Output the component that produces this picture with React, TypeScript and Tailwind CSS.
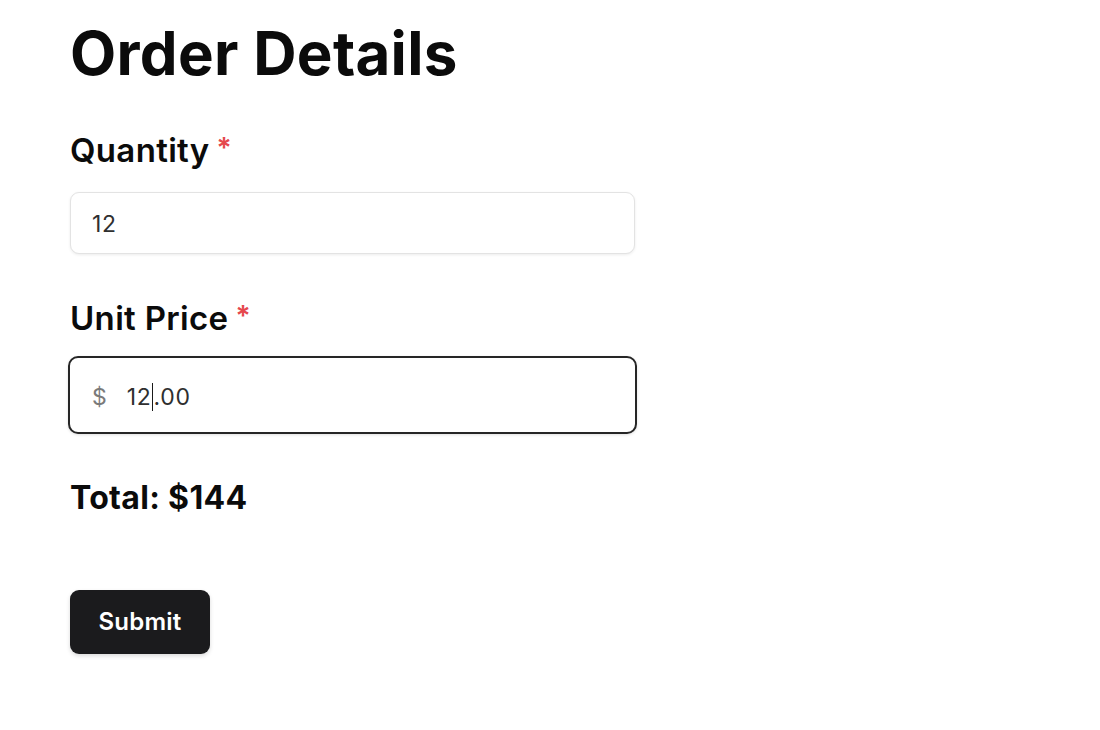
import React from "react";

export default function App() {
  return (
    <div
      className="min-h-[730px] w-[1100px] bg-white text-[#0b0b0b]"
      style={{ fontFamily: "Inter, 'Noto Sans', Arial, sans-serif" }}
    >
      <div className="flex flex-col items-start pl-[70px]">
        <h1 className="mt-[23px] text-[60px] font-bold leading-none tracking-[0.005em]">
          Order Details
        </h1>

        <label className="mt-[51px] flex items-start text-[33px] font-semibold leading-none tracking-[0.01em]">
          Quantity
          <span className="ml-[7px] text-[28px] text-[#e5484d]">*</span>
        </label>
        <div className="mt-[25px] flex h-[62px] w-[565px] items-center rounded-[9px] border border-[#e3e3e3] bg-white px-[21px] shadow-[0_1px_3px_rgba(0,0,0,0.08)]">
          <span className="translate-y-[1px] text-[23px] tracking-[0.03em] text-[#2f2f2f]">12</span>
        </div>

        <label className="mt-[48px] flex items-start text-[33px] font-semibold leading-none tracking-[0.01em]">
          Unit Price
          <span className="ml-[7px] text-[28px] text-[#e5484d]">*</span>
        </label>
        <div className="ml-[-2px] mt-[21px] flex h-[78px] w-[569px] items-center rounded-[10px] border-2 border-[#262626] bg-white px-[22px] shadow-[0_1px_3px_rgba(0,0,0,0.12)]">
          <span className="translate-y-[2px] text-[23px] text-[#7a7a7a]">$</span>
          <span className="ml-[20px] flex translate-y-[2px] items-center text-[23px] tracking-[0.03em] text-[#2f2f2f]">
            12
            <span className="mr-[1px] inline-block h-[28px] w-[1px] bg-[#1a1a1a]" />
            .00
          </span>
        </div>

        <div className="mt-[48px] text-[32px] font-bold leading-none tracking-[0.01em]">
          Total: $144
        </div>

        <button className="mt-[76px] flex h-[64px] w-[140px] items-center justify-center rounded-[9px] bg-[#1b1b1d] text-[24px] font-semibold tracking-[0.01em] text-white shadow-[0_2px_4px_rgba(0,0,0,0.15)]">
          Submit
        </button>
      </div>
    </div>
  );
}
